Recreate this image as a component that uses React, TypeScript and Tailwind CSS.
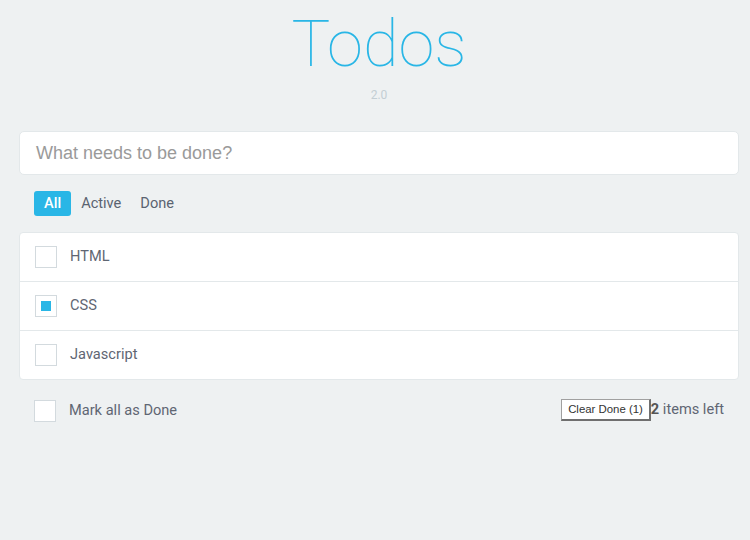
import React from "react";

const todos = [
  { text: "HTML", done: false },
  { text: "CSS", done: true },
  { text: "Javascript", done: false },
];

function Box({ checked }: { checked?: boolean }) {
  return (
    <span className="flex h-[22px] w-[22px] items-center justify-center border border-[#d3dade] bg-white">
      {checked && <span className="h-[10px] w-[10px] bg-[#29b6e6]" />}
    </span>
  );
}

export default function App() {
  return (
    <div className="min-h-[540px] bg-[#eef1f2] pl-[19px] font-['Roboto',sans-serif]">
      <div className="w-[720px]">
        {/* Header */}
        <div className="flex flex-col items-center pt-[4px]">
          <h1 className="text-[65px] leading-[80px] font-thin text-[#29b6e6]">Todos</h1>
          <span className="mt-[4px] text-[12px] leading-[14px] text-[#c3ced4]">2.0</span>
        </div>

        {/* New todo */}
        <div className="mt-[29px] flex h-[44px] items-center rounded-[5px] border border-[#e3e8ea] bg-white px-[16px]">
          <span className="font-['Liberation_Sans',sans-serif] text-[18px] text-[#9a9a9a]">What needs to be done?</span>
        </div>

        {/* Filters */}
        <div className="mt-[16px] flex items-center pl-[15px] text-[14.6px] text-[#5a6370]">
          <span className="flex h-[25px] items-center rounded-[3px] bg-[#29b6e6] px-[10px] font-medium text-white">All</span>
          <span className="flex h-[25px] items-center px-[10px]">Active</span>
          <span className="flex h-[25px] items-center px-[9px]">Done</span>
        </div>

        {/* List */}
        <div className="mt-[16px] rounded-[4px] border border-[#e3e8ea] bg-white">
          {todos.map((t, i) => (
            <div
              key={t.text}
              className={`flex items-center pl-[15px] ${i > 0 ? "h-[49px] border-t border-[#e3e8ea]" : "h-[48px]"}`}
            >
              <Box checked={t.done} />
              <span className="ml-[13px] text-[14.6px] text-[#5f6673]">{t.text}</span>
            </div>
          ))}
        </div>

        {/* Footer */}
        <div className="mt-[20px] flex items-center pl-[15px] pr-[15px]">
          <Box />
          <span className="ml-[13px] text-[14.6px] text-[#5f6673]">Mark all as Done</span>
          <div className="ml-auto flex items-center">
            <button className="-mt-[2px] h-[22px] border border-[#a0a0a0] border-r-2 border-b-2 border-r-[#6f6f6f] border-b-[#6f6f6f] bg-white px-[6px] font-['Liberation_Sans',sans-serif] text-[11.4px] text-[#333]">
              Clear Done (1)
            </button>
            <span className="-mt-[2px] text-[14.6px] text-[#5f6673]">
              <b className="text-[#555]">2</b> items left
            </span>
          </div>
        </div>
      </div>
    </div>
  );
}
